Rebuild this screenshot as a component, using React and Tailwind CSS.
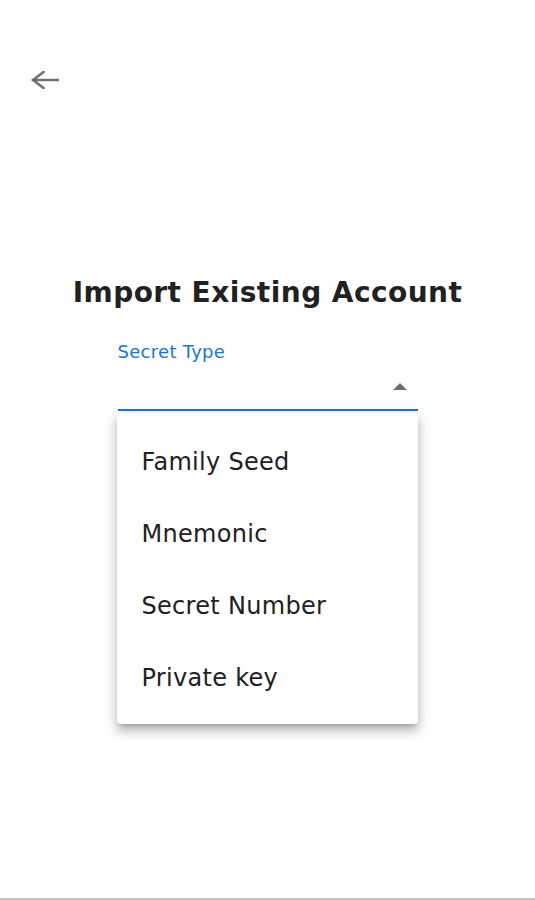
import React, { useState } from 'react';

const options = ['Family Seed', 'Mnemonic', 'Secret Number', 'Private key'];

export default function App() {
  const [open, setOpen] = useState(true);
  const [value, setValue] = useState('');

  return (
    <div
      className="min-h-screen flex flex-col bg-white"
      style={{ fontFamily: '"DejaVu Sans", Verdana, sans-serif' }}
    >
      {/* Back */}
      <div className="pt-[71px] pl-[31px]">
        <button className="block cursor-pointer" aria-label="back">
          <svg width="28" height="18" viewBox="0 0 28 18" fill="none">
            <path
              d="M27 9H2M12.5 1L2 9l10.5 8"
              stroke="#6f6f6f"
              strokeWidth="2.5"
              strokeLinecap="square"
              strokeLinejoin="miter"
            />
          </svg>
        </button>
      </div>

      {/* Title */}
      <h1 className="mt-[188px] text-center text-[28px] leading-[32px] font-bold tracking-[0.45px] text-[#212121]">
        Import Existing Account
      </h1>

      {/* Select */}
      <div className="mt-[33px] mx-auto w-[300px] relative">
        <label className="block text-[18px] leading-[20px] tracking-[0.28px] text-[#1976d2]">Secret Type</label>
        <div
          className="h-[49px] flex items-center justify-end border-b-2 border-[#1976d2] cursor-pointer"
          onClick={() => setOpen((o) => !o)}
        >
          <span className="mr-[11px] mb-[-1px] w-0 h-0 border-l-[7px] border-r-[7px] border-b-[7px] border-l-transparent border-r-transparent border-b-[#6f6f6f]" />
          <span className="sr-only">{value}</span>
        </div>

        {open && (
          <ul className="absolute left-[-1px] top-[71px] w-[301px] bg-white rounded pt-[13px] pb-[10px] shadow-[0px_5px_5px_-3px_rgba(0,0,0,0.2),0px_8px_10px_1px_rgba(0,0,0,0.14),0px_3px_14px_2px_rgba(0,0,0,0.12)]">
            {options.map((o) => (
              <li
                key={o}
                onClick={() => { setValue(o); setOpen(false); }}
                className="h-[72px] leading-[72px] pl-[25px] text-[24px] tracking-[0.3px] text-[#212121] cursor-pointer"
              >
                {o}
              </li>
            ))}
          </ul>
        )}
      </div>

      <div className="flex-1" />
      <div className="h-[2px] bg-[#c4c4c4]" />
    </div>
  );
}
